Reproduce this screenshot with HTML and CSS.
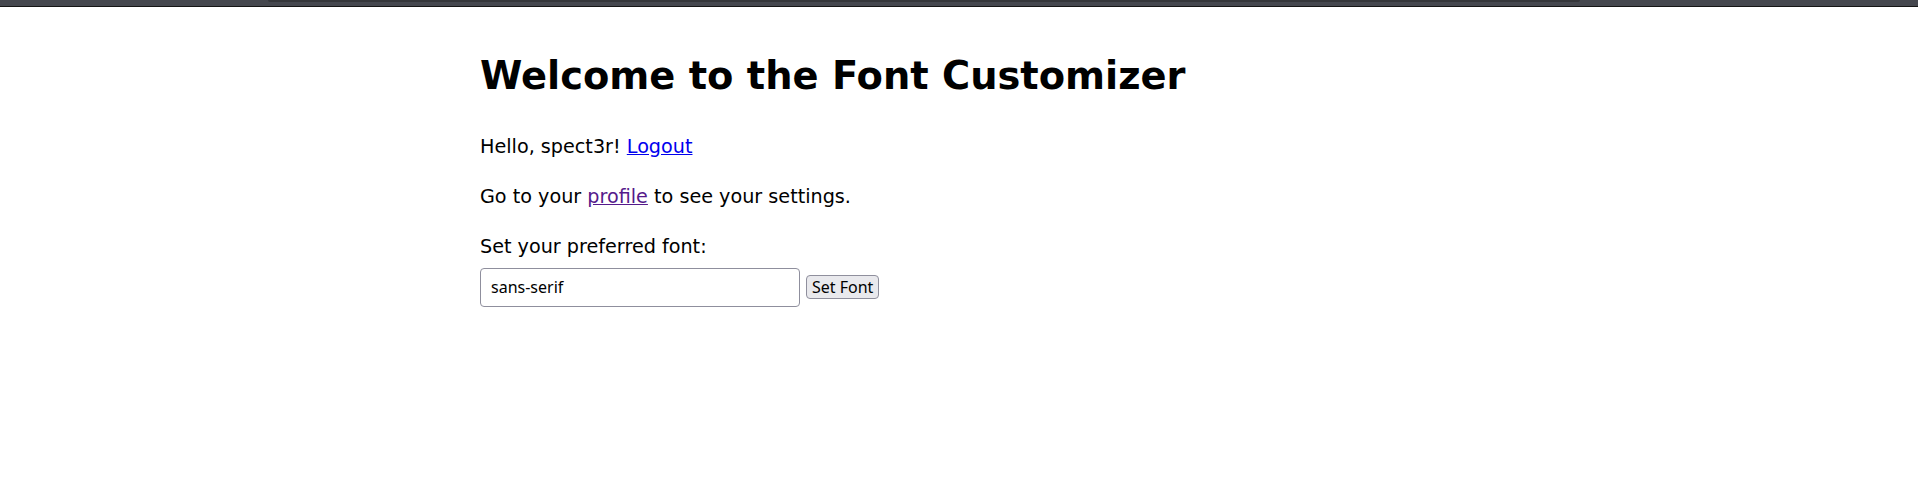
FILE: index.html
```html
<!DOCTYPE html>
<html lang="en">
<head>
<meta charset="utf-8">
<title>Font Customizer</title>
<link rel="stylesheet" href="styles.css">
</head>
<body>
<div class="chrome"><div class="chrome-tab"></div></div>
<main class="container">
  <h1 class="title">Welcome to the Font Customizer</h1>
  <p class="line">Hello, spect3r! <a class="link" href="#logout">Logout</a></p>
  <p class="line">Go to your <a class="link visited" href="#profile">profile</a> to see your settings.</p>
  <form class="font-form">
    <label class="line label" for="font">Set your preferred font:</label>
    <div class="controls">
      <input class="field" id="font" type="text" value="sans-serif">
      <button class="btn" type="button">Set Font</button>
    </div>
  </form>
</main>
</body>
</html>
```
FILE: styles.css
```css
html, body {
  margin: 0;
  padding: 0;
  background: #ffffff;
}
body {
  font-family: "DejaVu Sans", sans-serif;
  font-size: 19.2px;
  line-height: 1.6;
  color: #000000;
}
.chrome {
  height: 6px;
  background: #45474e;
  border-bottom: 1px solid #151515;
  display: flex;
}
.chrome-tab {
  margin-left: 268px;
  width: 1312px;
  height: 2px;
  background: #35363a;
  border-bottom-left-radius: 2px;
  border-bottom-right-radius: 2px;
}
.container {
  max-width: 958px;
  margin: 0 auto;
  padding-top: 38px;
}
.title {
  font-size: 38.4px;
  font-weight: bold;
  margin: 0 0 25.7px 0;
  line-height: 1.6;
}
.line {
  margin: 0 0 19.2px 0;
}
.link {
  color: #0000ee;
  text-decoration: underline;
}
.link.visited {
  color: #551a8b;
}
.font-form {
  margin: 0;
}
.label {
  display: block;
  margin-bottom: 5px;
}
.controls {
  display: flex;
  align-items: center;
  gap: 6px;
}
.field {
  box-sizing: border-box;
  width: 320px;
  height: 39px;
  padding: 0 10px;
  border: 1px solid #8f8f9d;
  border-radius: 4px;
  font-family: "Noto Sans", sans-serif;
  font-size: 16px;
  color: #000;
  background: #fff;
  margin: 0;
}
.btn {
  box-sizing: border-box;
  height: 24px;
  padding: 0 5px;
  border: 1px solid #8f8f9d;
  border-radius: 4px;
  background: #e9e9ed;
  font-family: "Noto Sans", sans-serif;
  font-size: 16px;
  line-height: 1;
  color: #000;
  margin: 0;
}
```
